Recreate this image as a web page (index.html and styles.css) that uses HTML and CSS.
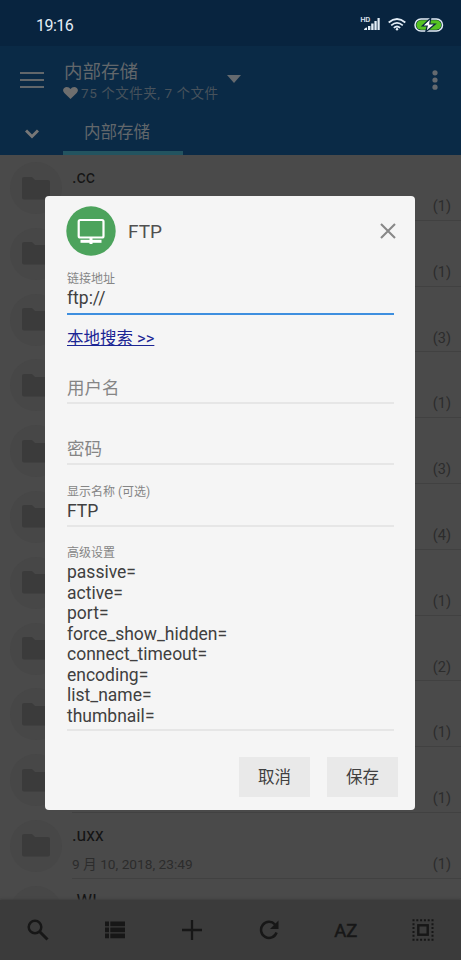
FILE: index.html
```html
<!DOCTYPE html>
<html lang="zh-CN">
<head>
<meta charset="utf-8">
<title>FTP</title>
<link rel="stylesheet" href="styles.css">
</head>
<body>
<svg width="0" height="0" class="defs">
  <symbol id="folder" viewBox="0 0 28 23"><path d="M2 0h8l3 3h13q2 0 2 2v15.500q0 2-2 2H2q-2 0-2-2V2q0-2 2-2z" fill="currentColor"/></symbol>
</svg>
<div class="screen">
  <div class="status">
    <span class="time">19:16</span>
    <span class="hd">HD</span>
    <svg class="signal" width="16" height="13" viewBox="0 0 16 13" fill="#e3edf6"><path d="M0 12q0-2 3-2.500V12zM4 8h2.400v4H4zM7.200 5.500h2.400V12H7.200zM10.400 3h2.300v9h-2.300zM13.500 0h2.200v12h-2.200z"/></svg>
    <svg class="wifi" width="18" height="13" viewBox="0 0 18 13" fill="none" stroke="#e3edf6" stroke-width="1.700"><path d="M.7 4.500Q9-2.500 17.300 4.500M3.200 7.300Q9 2.500 14.800 7.300M5.800 9.800Q9 7.200 12.200 9.800"/><circle cx="9" cy="11.300" r="1.200" fill="#e3edf6" stroke="none"/></svg>
    <svg class="battery" width="30" height="14" viewBox="0 0 30 14"><rect x="1" y="1" width="27.500" height="12" rx="6" fill="#08243f" stroke="#e3edf6" stroke-width="1.500"/><rect x="2.300" y="2.300" width="24.900" height="9.400" rx="4.700" fill="#56c322"/><path d="M16.800 0L8.300 8h4.900L11.700 14l9.500-8h-5.400z" fill="#fff" stroke="#08243f" stroke-width="1.200"/></svg>
  </div>
  <header class="appbar">
    <div class="titlebar">
      <svg class="menu" width="24" height="16" viewBox="0 0 24 16" stroke="#62676b" stroke-width="2"><path d="M0 1h24M0 8h24M0 15h24"/></svg>
      <div class="titles">
        <div class="title">内部存储</div>
        <div class="subtitle"><svg width="15" height="12" viewBox="0 0 15 12"><path d="M7.500 12L1.300 6.100C-1.500 3 1 0 3.800 0q2.500 0 3.700 2Q8.700 0 11.200 0C14 0 16.500 3 13.700 6.100z" fill="#6e6e6e"/></svg><span>75 个文件夹, 7 个文件</span></div>
      </div>
      <svg class="caret" width="14" height="8" viewBox="0 0 14 8"><path d="M0 0h14L7 8z" fill="#656a6f"/></svg>
      <svg class="more" width="6" height="20" viewBox="0 0 6 20" fill="#656a6f"><circle cx="3" cy="2.800" r="2.600"/><circle cx="3" cy="10" r="2.600"/><circle cx="3" cy="17.200" r="2.600"/></svg>
    </div>
    <div class="tabs">
      <svg class="chev" width="14" height="10" viewBox="0 0 14 10" fill="none" stroke="#777" stroke-width="3"><path d="M1 1.500l6 6 6-6"/></svg>
      <div class="tab">内部存储</div>
    </div>
  </header>
  <main class="list">
    <div class="row"><div class="avatar"><svg><use href="#folder"/></svg></div><div class="info"><div class="name">.cc</div><div class="meta"><span></span><span>(1)</span></div></div></div>
    <div class="row"><div class="avatar"><svg><use href="#folder"/></svg></div><div class="info"><div class="name"></div><div class="meta"><span></span><span>(1)</span></div></div></div>
    <div class="row"><div class="avatar"><svg><use href="#folder"/></svg></div><div class="info"><div class="name"></div><div class="meta"><span></span><span>(3)</span></div></div></div>
    <div class="row"><div class="avatar"><svg><use href="#folder"/></svg></div><div class="info"><div class="name"></div><div class="meta"><span></span><span>(1)</span></div></div></div>
    <div class="row"><div class="avatar"><svg><use href="#folder"/></svg></div><div class="info"><div class="name"></div><div class="meta"><span></span><span>(3)</span></div></div></div>
    <div class="row"><div class="avatar"><svg><use href="#folder"/></svg></div><div class="info"><div class="name"></div><div class="meta"><span></span><span>(4)</span></div></div></div>
    <div class="row"><div class="avatar"><svg><use href="#folder"/></svg></div><div class="info"><div class="name"></div><div class="meta"><span></span><span>(1)</span></div></div></div>
    <div class="row"><div class="avatar"><svg><use href="#folder"/></svg></div><div class="info"><div class="name"></div><div class="meta"><span></span><span>(2)</span></div></div></div>
    <div class="row"><div class="avatar"><svg><use href="#folder"/></svg></div><div class="info"><div class="name"></div><div class="meta"><span></span><span>(1)</span></div></div></div>
    <div class="row"><div class="avatar"><svg><use href="#folder"/></svg></div><div class="info"><div class="name"></div><div class="meta"><span></span><span>(1)</span></div></div></div>
    <div class="row"><div class="avatar"><svg><use href="#folder"/></svg></div><div class="info"><div class="name">.uxx</div><div class="meta"><span>9 月 10, 2018, 23:49</span><span>(1)</span></div></div></div>
    <div class="row"><div class="avatar"><svg><use href="#folder"/></svg></div><div class="info"><div class="name">.WL</div></div></div>
  </main>
  <nav class="toolbar">
    <div><svg width="22" height="22" viewBox="0 0 22 22" fill="none" stroke="#171717"><circle cx="8" cy="8" r="6.300" stroke-width="2.500"/><path d="M12.500 12.500l8 8" stroke-width="3"/></svg></div>
    <div><svg width="20" height="18" viewBox="0 0 20 18" fill="#171717"><path d="M0 .5h4v4.800H0zM5.300.5H20v4.800H5.300zM0 6.500h4v4.800H0zM5.300 6.500H20v4.800H5.300zM0 12.500h4v4.800H0zM5.300 12.500H20v4.800H5.300z"/></svg></div>
    <div><svg width="20" height="20" viewBox="0 0 20 20" stroke="#171717" stroke-width="2.300"><path d="M0 10h20M10 0v20"/></svg></div>
    <div><svg width="20" height="20" viewBox="0 0 20 20"><path d="M16 4.500A8 8 0 1 0 17.600 12.500" fill="none" stroke="#171717" stroke-width="2.500"/><path d="M19.500.5v8.500H11z" fill="#171717"/></svg></div>
    <div class="az">AZ</div>
    <div><svg width="22" height="22" viewBox="0 0 22 22" fill="none" stroke="#171717"><rect x="6.300" y="6.300" width="9.400" height="9.400" stroke-width="2.400"/><path d="M.5 1.200h21M.5 20.800h21" stroke-width="2" stroke-dasharray="2 1.800"/><path d="M1.500 4.300v15M20.500 4.300v15" stroke-width="2" stroke-dasharray="2 1.800"/></svg></div>
  </nav>
  <section class="dialog">
    <div class="head">
      <svg width="50" height="50" viewBox="0 0 50 50"><circle cx="25" cy="25" r="24.700" fill="#4ca35c"/><g fill="none" stroke="#fff" stroke-width="2.200"><rect x="12.700" y="14" width="24.800" height="17.500" rx="1.500"/><path d="M14.500 35.300h21" stroke-width="3"/><path d="M25 32v6" stroke-width="3"/></g></svg>
      <h1>FTP</h1>
      <svg class="close" width="16" height="16" viewBox="0 0 16 16" stroke="#888" stroke-width="2.100"><path d="M1 1l14 14M15 1L1 15"/></svg>
    </div>
    <div class="field address"><label>链接地址</label><div class="value">ftp://</div></div>
    <a class="search">本地搜索 &gt;&gt;</a>
    <div class="field user"><div class="hint">用户名</div></div>
    <div class="field pass"><div class="hint">密码</div></div>
    <div class="field display"><label>显示名称 (可选)</label><div class="value">FTP</div></div>
    <div class="field advanced"><label>高级设置</label><div class="value">passive=<br>active=<br>port=<br>force_show_hidden=<br>connect_timeout=<br>encoding=<br>list_name=<br>thumbnail=</div></div>
    <div class="actions"><button>取消</button><button>保存</button></div>
  </section>
</div>
</body>
</html>
```
FILE: styles.css
```css
* { box-sizing: border-box; }
body { margin: 0; font-family: Roboto, "Noto Sans CJK SC", sans-serif; }
svg { display: block; flex: none; }
.defs { position: absolute; }
.screen { position: relative; width: 461px; height: 960px; overflow: hidden; display: flex; flex-direction: column; background: #4a4a4a; }

.status { height: 46px; flex: none; background: #08243f; display: flex; align-items: flex-start; padding: 0 16px 0 36px; color: #e3edf6; }
.time { font-size: 16px; line-height: 20px; margin-top: 16px; letter-spacing: -0.5px; flex: 1; }
.hd { font-size: 7px; line-height: 6px; margin-top: 17px; -webkit-text-stroke: 0.2px #e3edf6; }
.signal { margin: 18px 8px 0 -6px; }
.wifi { margin: 18px 8px 0 0; }
.battery { margin: 18px 1px 0 0; }

.appbar { height: 109px; flex: none; background: #0a2a46; color: #62676b; }
.titlebar { height: 64px; display: flex; align-items: flex-start; padding: 0 23px 0 20px; }
.menu { margin-top: 26px; }
.titles { width: 155px; margin-left: 20px; padding-top: 14px; white-space: nowrap; }
.title { font-size: 18.500px; line-height: 24px; }
.subtitle { display: flex; align-items: center; gap: 3px; margin-left: -1px; font-size: 13.500px; line-height: 18px; color: #47525c; letter-spacing: 0.55px; }
.subtitle svg { margin-top: -1px; }
.caret { margin: 29px 0 0 8px; }
.more { margin: 24px 0 0 auto; }
.tabs { height: 45px; display: flex; }
.chev { margin: 19px 0 0 25px; }
.tab { width: 120px; margin-left: 24px; padding: 1px 0 0 21px; font-size: 16.500px; line-height: 44px; height: 45px; border-bottom: 4px solid #235460; }

.list { flex: 1; min-height: 0; overflow: hidden; }
.row { height: 65.8px; display: flex; padding-left: 10px; }
.avatar { width: 52px; height: 52px; margin-top: 7px; border-radius: 50%; background: #474747; color: #3b3b3b; display: flex; align-items: center; justify-content: center; }
.avatar svg { width: 28px; height: 23px; }
.info { flex: 1; margin-left: 10px; border-bottom: 1px solid #414141; padding-right: 10px; }
.name { height: 22px; margin-top: 11px; font-size: 17.500px; line-height: 22px; color: #141414; }
.meta { display: flex; justify-content: space-between; margin-top: 8px; font-size: 13.700px; line-height: 20px; color: #2c2c2c; }
.meta span:last-child { font-size: 14.500px; padding-top: 1px; }

.toolbar { height: 60px; flex: none; background: #3b3b3b; display: grid; grid-template-columns: repeat(6, 1fr); align-items: center; justify-items: center; box-shadow: 0 -1px 2px #3e3e3e; z-index: 1; }
.az { font-size: 18.500px; line-height: 22px; padding-top: 2px; -webkit-text-stroke: 0.5px #171717; color: #171717; }

.dialog { position: absolute; left: 45px; top: 196px; width: 370px; height: 614px; border-radius: 4px; background: #f5f5f5; padding: 10px 21px 0 22px; z-index: 2; }
.head { height: 63px; margin-left: -1px; display: flex; align-items: flex-start; }
.head h1 { margin: 14px 0 0 12px; font-size: 19px; line-height: 24px; font-weight: 400; color: #505050; flex: 1; }
.close { margin: 17px -2px 0 0; }
.field { border-bottom: 2px solid #e6e6e6; color: #404040; }
.field label { display: block; padding-top: 1px; font-size: 12px; line-height: 18px; color: #858585; }
.value { font-size: 17.500px; line-height: 20.500px; }
.hint { font-size: 17.500px; line-height: 24px; color: #858585; }
.address { height: 46px; border-color: #3e8fdf; }
.search { display: block; width: max-content; margin-top: 12px; font-size: 16.500px; line-height: 24px; color: #1b2594; text-decoration: underline; }
.user { height: 28px; margin-top: 25px; }
.pass { height: 28px; margin-top: 33px; }
.display { height: 45px; margin-top: 17px; }
.advanced { height: 188px; margin-top: 16px; }
.actions { display: flex; justify-content: flex-end; gap: 17px; margin: 26px -4px 0 0; }
.actions button { width: 71px; height: 40px; padding: 2px 0 0; border: 0; background: #e9e9e9; color: #404040; font: 16.500px/24px Roboto, "Noto Sans CJK SC", sans-serif; }
```
